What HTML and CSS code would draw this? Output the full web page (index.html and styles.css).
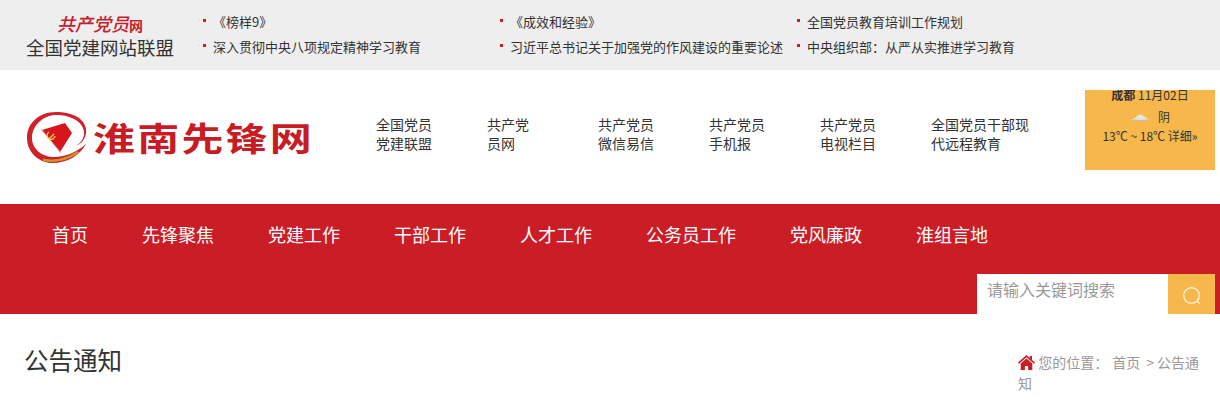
FILE: index.html
```html
<!DOCTYPE html>
<html lang="zh">
<head>
<meta charset="utf-8">
<title>公告通知</title>
<link rel="stylesheet" href="styles.css">
</head>
<body>
<div class="topbar">
  <div class="alliance">
    <div class="alliance-mark"><span class="script">共产党员</span><span class="net">网</span></div>
    <div class="alliance-name">全国党建网站联盟</div>
  </div>
  <ul class="toplinks">
    <li>《榜样9》</li>
    <li>《成效和经验》</li>
    <li>全国党员教育培训工作规划</li>
    <li>深入贯彻中央八项规定精神学习教育</li>
    <li>习近平总书记关于加强党的作风建设的重要论述</li>
    <li>中央组织部：从严从实推进学习教育</li>
  </ul>
</div>
<header class="masthead">
  <div class="logo">
    <svg class="emblem" width="64" height="56" viewBox="0 0 64 56">
      <path d="M60 18C58 6 44 1 30 1 13 1 1 12 1 27c0 15 13 25 25 25 16 0 28-8 34-19-10 9-22 13-32 13C16 46 6 38 6 27 6 14 18 4 30 4c14 0 26 6 28 16 1 6-3 12-8 15 7-3 11-10 10-17z" fill="#d0202a"/>
      <path d="M16 19l23-7 7 10-12 19z" fill="#d8141c"/>
      <path d="M15 18l20 24" stroke="#c9a090" stroke-width="1" fill="none"/>
      <path d="M23 21a4 4 0 1 0 6 4" fill="none" stroke="#f3d24a" stroke-width="1.3"/>
      <path d="M23 28l5-5" stroke="#f3d24a" stroke-width="1.2"/>
      <path d="M17 49c12 2 25-1 35-8" stroke="#c9982a" stroke-width="2.4" fill="none"/>
    </svg>
    <span class="logo-text">淮南先锋网</span>
  </div>
  <nav class="quicklinks">
    <a>全国党员<br>党建联盟</a>
    <a>共产党<br>员网</a>
    <a>共产党员<br>微信易信</a>
    <a>共产党员<br>手机报</a>
    <a>共产党员<br>电视栏目</a>
    <a>全国党员干部现<br>代远程教育</a>
  </nav>
  <div class="weather">
    <div class="weather-date"><b>成都</b> 11月02日</div>
    <div class="weather-now">
      <svg width="20" height="10" viewBox="0 0 22 10"><path d="M1 8c3-1 4-2 6-3 1-3 6-4 8-1 2 1 4 3 6 4-6 2-14 2-20 0z" fill="#e8e4dc"/><path d="M3 8c5 1 11 1 16 0" stroke="#bdb8ae" stroke-width="1.2" fill="none"/></svg>
      <span>阴</span>
    </div>
    <div class="weather-temp">13℃ ~ 18℃ 详细»</div>
  </div>
</header>
<div class="mainnav">
  <ul class="navlist">
    <li>首页</li>
    <li>先锋聚焦</li>
    <li>党建工作</li>
    <li>干部工作</li>
    <li>人才工作</li>
    <li>公务员工作</li>
    <li>党风廉政</li>
    <li>淮组言地</li>
  </ul>
  <div class="search">
    <div class="search-input">请输入关键词搜索</div>
    <div class="search-btn">
      <svg width="20" height="20" viewBox="0 0 20 20"><circle cx="9.5" cy="9.5" r="7.8" fill="none" stroke="#fff" stroke-width="1.1"/><path d="M15.2 15.2l2.4 2.4" stroke="#fff" stroke-width="1.1"/></svg>
    </div>
  </div>
</div>
<div class="pagehead">
  <h1>公告通知</h1>
  <div class="crumb">
    <svg class="home" width="17" height="15" viewBox="0 0 17 15"><path d="M8.5 0L0 7.5l1 1.2L8.5 2.3 16 8.7l1-1.2-3-2.6V1h-2.2v2L8.5 0z" fill="#cb1d26"/><path d="M8.5 3.6L2.7 8.6V15h4.2v-4h3.2v4h4.2V8.6z" fill="#cb1d26"/></svg>
    您的位置：<span class="crumb-home">首页</span><span class="crumb-sep">&gt;</span>公告通知
  </div>
</div>
</body>
</html>
```
FILE: styles.css
```css
* { box-sizing: border-box; }
html, body { margin: 0; padding: 0; }
body {
  width: 1220px;
  height: 400px;
  overflow: hidden;
  background: #fff;
  color: #333;
  font-family: "Noto Sans CJK SC", "Noto Sans", sans-serif;
}
ul { list-style: none; margin: 0; padding: 0; }

.topbar {
  display: flex;
  height: 70px;
  background: #eee;
}
.alliance {
  flex: none;
  width: 200px;
  text-align: center;
  padding-top: 13px;
}
.alliance-mark {
  display: flex;
  justify-content: center;
  align-items: center;
  height: 21px;
  color: #c4202a;
  line-height: 21px;
}
.script {
  font-size: 18px;
  font-style: italic;
  font-weight: 500;
}
.net { font-size: 14px; font-weight: 700; margin-top: 3px; }
.alliance-name {
  font-size: 18.5px;
  line-height: 26px;
  color: #333;
}
.toplinks {
  flex: none;
  display: grid;
  grid-template-columns: repeat(3, 297px);
  grid-auto-rows: 25px;
  padding: 9px 0 0 3px;
}
.toplinks li {
  position: relative;
  padding-left: 10px;
  font-size: 13px;
  line-height: 25px;
  white-space: nowrap;
  color: #333;
}
.toplinks li::before {
  content: "";
  position: absolute;
  left: 0;
  top: 10px;
  width: 3px;
  height: 3px;
  background: #cb1d26;
}

.masthead {
  display: flex;
  height: 134px;
}
.logo {
  flex: none;
  width: 376px;
  display: flex;
  align-items: flex-start;
  padding: 41px 0 0 26px;
}
.emblem { flex: none; }
.logo-text {
  margin: 7px 0 0 3px;
  font-size: 42px;
  line-height: 48px;
  font-weight: 700;
  letter-spacing: 2.2px;
  color: #c71c24;
  white-space: nowrap;
  transform: scaleY(.78);
  transform-origin: left top;
}
.quicklinks {
  flex: none;
  width: 709px;
  display: grid;
  grid-template-columns: repeat(5, 111px) 154px;
  padding-top: 45px;
}
.quicklinks a {
  font-size: 14px;
  line-height: 19px;
  color: #333;
}
.weather {
  flex: none;
  width: 130px;
  height: 80px;
  margin-top: 20px;
  background: #f6b74b;
  text-align: center;
  font-size: 12px;
  color: #333;
  line-height: 16px;
  overflow: hidden;
}
.weather-date { margin-top: -3px; height: 18px; }
.weather-now {
  display: flex;
  justify-content: center;
  align-items: center;
  gap: 8px;
  height: 22px;
  padding-top: 2px;
}
.weather-temp { line-height: 18px; }

.mainnav {
  height: 110px;
  background: #cb1d26;
  display: flex;
  flex-direction: column;
}
.navlist {
  display: flex;
  gap: 54px;
  padding: 17px 0 0 52px;
  height: 70px;
  font-size: 18px;
  line-height: 26px;
  color: #fff;
}
.search {
  display: flex;
  align-self: flex-end;
  margin-right: 5px;
  height: 40px;
}
.search-input {
  width: 191px;
  background: #fff;
  color: #999;
  font-size: 16px;
  line-height: 30px;
  padding-left: 10px;
}
.search-btn {
  width: 47px;
  background: #f6b74b;
  display: flex;
  justify-content: center;
  align-items: center;
  padding-top: 3px;
}

.pagehead {
  display: flex;
  justify-content: space-between;
  align-items: flex-start;
  padding: 0 15px 0 25px;
}
h1 {
  margin: 28px 0 0 -1px;
  font-size: 24.5px;
  line-height: 36px;
  font-weight: 400;
  color: #333;
}
.crumb {
  width: 187px;
  margin-top: 38px;
  font-size: 14px;
  line-height: 21px;
  color: #999;
}
.home { vertical-align: -2px; }
.crumb-home { margin-left: 4px; }
.crumb-sep { margin: 0 3px 0 6px; }
```
